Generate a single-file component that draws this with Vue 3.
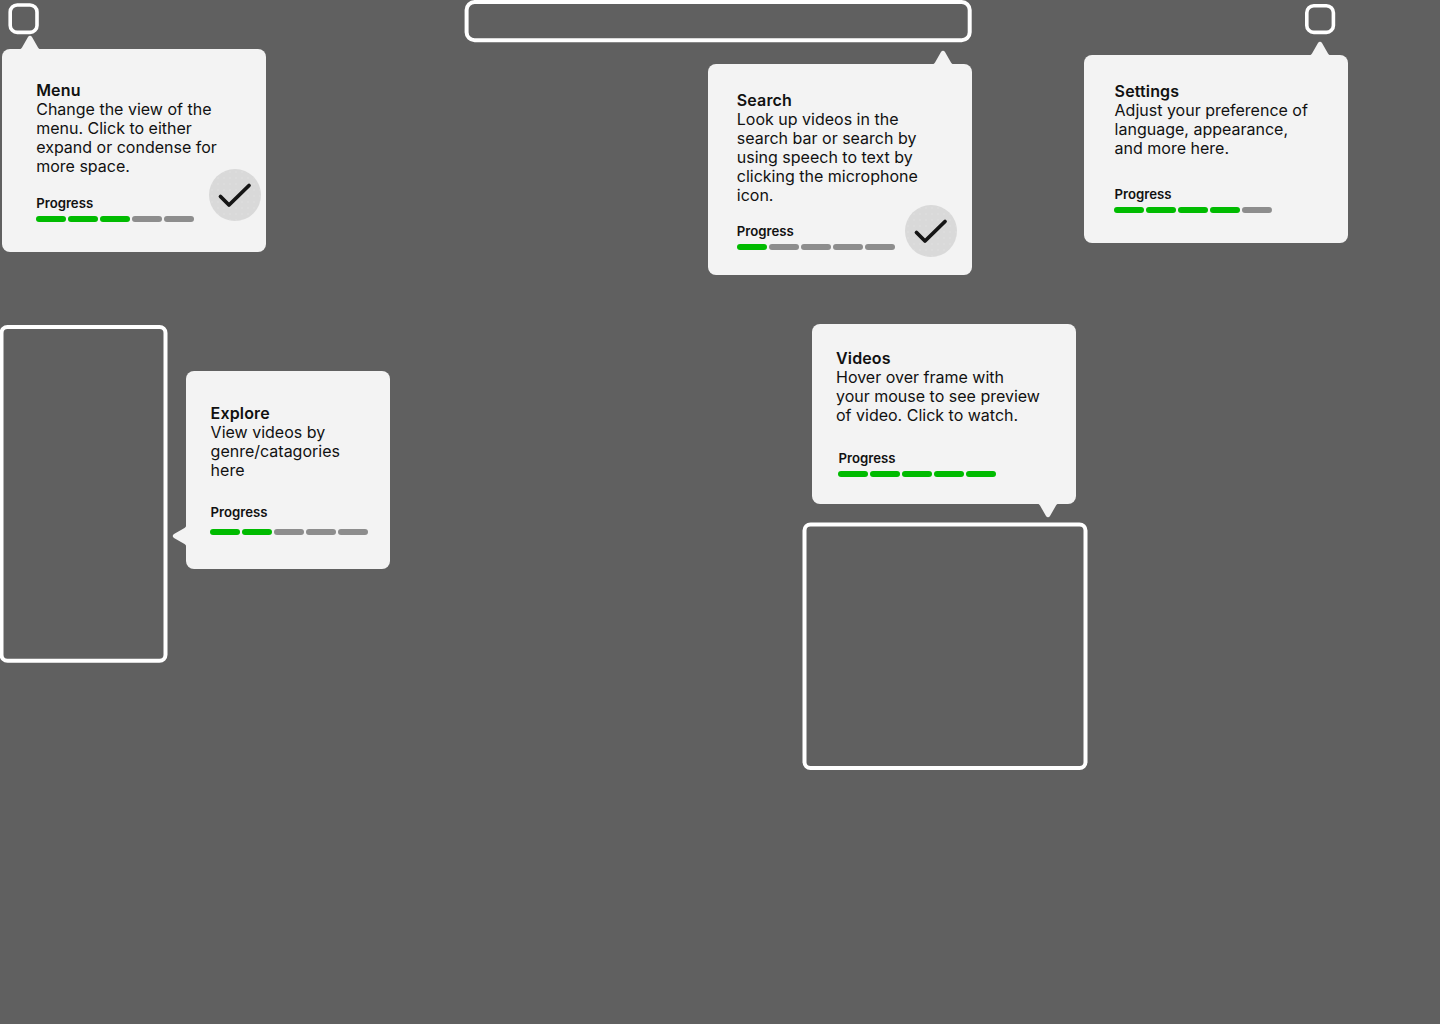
<script setup>
const frames = [
  { id: 'menu-btn', x: 10.2, y: 5, w: 26.8, h: 27.4, r: 7, s: 3.6 },
  { id: 'search-bar', x: 466.6, y: 2, w: 503.1, h: 38.2, r: 8, s: 4 },
  { id: 'settings-btn', x: 1306.8, y: 5.8, w: 26.6, h: 26.6, r: 7, s: 3.6 },
  { id: 'sidebar', x: 1.5, y: 327, w: 164, h: 333.8, r: 6, s: 4 },
  { id: 'video', x: 804.5, y: 524.5, w: 281, h: 243.6, r: 6, s: 4 },
];

const cards = [
  {
    title: 'Menu',
    lines: ['Change the view of the', 'menu. Click to either', 'expand or condense for', 'more space.'],
    done: 3,
    left: 2.4, top: 49, width: 264, height: 203.4,
    padTop: 32, padLeft: 33.8, gap: 19, barNudge: -0.2,
    arrow: 'up', arrowAt: 12.6,
    check: { right: 5.4, bottom: 31.4 },
  },
  {
    title: 'Search',
    lines: ['Look up videos in the', 'search bar or search by', 'using speech to text by', 'clicking the microphone', 'icon.'],
    done: 1,
    left: 707.8, top: 64, width: 264, height: 211,
    padTop: 27, padLeft: 29, gap: 18, barNudge: -0.3,
    arrow: 'up', arrowAt: 220.5,
    check: { right: 14.8, bottom: 18 },
  },
  {
    title: 'Settings',
    lines: ['Adjust your preference of', 'language, appearance,', 'and more here.'],
    done: 4,
    left: 1084.4, top: 55.4, width: 264, height: 187.8,
    padTop: 26.6, padLeft: 30.2, gap: 28, barNudge: -0.6,
    arrow: 'up', arrowAt: 220.6,
  },
  {
    title: 'Explore',
    lines: ['View videos by', 'genre/catagories', 'here'],
    done: 2,
    left: 186, top: 371, width: 204, height: 198,
    padTop: 33, padLeft: 24.6, gap: 24, barGap: 9, barNudge: -0.6,
    arrow: 'left', arrowAt: 149.6,
  },
  {
    title: 'Videos',
    lines: ['Hover over frame with', 'your mouse to see preview', 'of video. Click to watch.'],
    done: 5,
    left: 812, top: 324, width: 264, height: 179.6,
    padTop: 24.6, padLeft: 24, gap: 25, barShift: 2.6, barNudge: -0.4,
    arrow: 'down', arrowAt: 220.7,
  },
];
</script>

<template>
  <div class="canvas">
    <svg class="frames" width="1440" height="1024" viewBox="0 0 1440 1024">
      <rect
        v-for="f in frames"
        :key="f.id"
        :x="f.x" :y="f.y" :width="f.w" :height="f.h" :rx="f.r"
        :stroke-width="f.s"
        fill="none" stroke="#fff"
      />
    </svg>

    <div
      v-for="c in cards"
      :key="c.title"
      class="card"
      :style="{ left: c.left + 'px', top: c.top + 'px', width: c.width + 'px', height: c.height + 'px', paddingTop: c.padTop + 'px', paddingLeft: c.padLeft + 'px' }"
    >
      <svg
        v-if="c.arrow === 'up'"
        class="arrow arrow-up"
        :style="{ left: c.arrowAt + 'px' }"
        width="30" height="15" viewBox="0 0 30 15"
      >
        <path d="M0 15 C4 15 5.5 14.5 7 12.5 L13 2 C14 0.3 16 0.3 17 2 L23 12.5 C24.5 14.5 26 15 30 15 Z" fill="#f3f3f3" />
      </svg>
      <svg
        v-else-if="c.arrow === 'down'"
        class="arrow arrow-down"
        :style="{ left: c.arrowAt + 'px' }"
        width="30" height="15" viewBox="0 0 30 15"
      >
        <path d="M0 0 C4 0 5.5 0.5 7 2.5 L13 13 C14 14.7 16 14.7 17 13 L23 2.5 C24.5 0.5 26 0 30 0 Z" fill="#f3f3f3" />
      </svg>
      <svg
        v-else
        class="arrow arrow-left"
        :style="{ top: c.arrowAt + 'px' }"
        width="15" height="30" viewBox="0 0 15 30"
      >
        <path d="M15 0 C15 4 14.5 5.5 12.5 7 L2 13 C0.3 14 0.3 16 2 17 L12.5 23 C14.5 24.5 15 26 15 30 Z" fill="#f3f3f3" />
      </svg>

      <div class="title">{{ c.title }}</div>
      <div v-for="line in c.lines" :key="line" class="line">{{ line }}</div>

      <div class="progress" :style="{ marginTop: c.gap + 'px', marginLeft: (c.barShift || 0) + 'px' }">
        <div class="progress-label">Progress</div>
        <div class="bars" :style="{ marginTop: (c.barGap || 5) + 'px', marginLeft: (c.barNudge || 0) + 'px' }">
          <span v-for="n in 5" :key="n" class="bar" :class="{ on: n <= c.done }"></span>
        </div>
      </div>

      <div v-if="c.check" class="check" :style="{ right: c.check.right + 'px', bottom: c.check.bottom + 'px' }">
        <svg width="52" height="52" viewBox="0 0 52 52">
          <path d="M11.5 27.5 L20 36 L40 16.5" fill="none" stroke="#151515" stroke-width="3.8" stroke-linecap="round" stroke-linejoin="round" />
        </svg>
      </div>
    </div>
  </div>
</template>

<style scoped>
.canvas {
  position: relative;
  width: 1440px;
  height: 1024px;
  overflow: hidden;
  background: #606060;
  font-family: Inter, "Liberation Sans", sans-serif;
  color: #111;
}

.frames {
  position: absolute;
  left: 0;
  top: 0;
  display: block;
}

.card {
  position: absolute;
  box-sizing: border-box;
  background: #f3f3f3;
  border-radius: 8px;
}

.arrow {
  position: absolute;
  display: block;
}

.arrow-up {
  top: -14.5px;
}

.arrow-down {
  bottom: -14.5px;
}

.arrow-left {
  left: -14.5px;
}

.title {
  font-size: 16px;
  line-height: 19px;
  font-weight: 600;
  letter-spacing: 0.15px;
}

.line {
  font-size: 16px;
  line-height: 19px;
  font-weight: 400;
  white-space: nowrap;
}

.progress-label {
  font-size: 13.2px;
  line-height: 16px;
  font-weight: 600;
}

.bars {
  display: flex;
  gap: 2px;
}

.bar {
  display: block;
  width: 30px;
  height: 6px;
  border-radius: 3px;
  background: #8d8d8d;
}

.bar.on {
  background: #00bb00;
}

.check {
  position: absolute;
  width: 52px;
  height: 52px;
  border-radius: 50%;
  background-color: #d9d9d9;
  background-image: radial-gradient(circle, #e0e0e0 0.5px, transparent 0.9px);
  background-size: 6px 6px;
}

.check svg {
  display: block;
}
</style>
